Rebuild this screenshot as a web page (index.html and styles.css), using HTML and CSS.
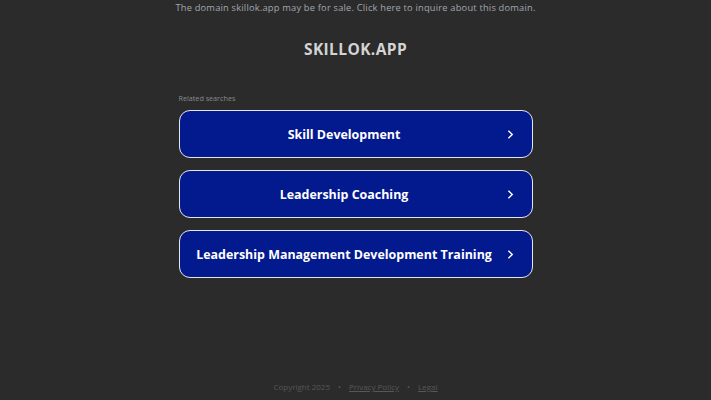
FILE: index.html
```html
<!DOCTYPE html>
<html lang="en">
  <head>
    <meta charset="UTF-8" />
    <meta name="viewport" content="width=device-width, initial-scale=1.0" />
    <title>skillok.app</title>
    <link rel="stylesheet" href="styles.css">
  </head>
  <body>
    <div class="page">
      <!-- 상단 안내 -->
      <p class="sale-notice">The domain skillok.app may be for sale. Click here to inquire about this domain.</p>
      <h1 class="domain-title">SKILLOK.APP</h1>

      <!-- 관련 검색 -->
      <div class="related">
        <p class="related-label">Related searches</p>
        <a class="search-btn" href="#">
          <span class="search-text">Skill Development</span>
          <svg class="chevron" viewBox="0 0 10 14" width="7" height="11"><path d="M2 1.5 L7.5 7 L2 12.5" fill="none" stroke="#fff" stroke-width="2" /></svg>
        </a>
        <a class="search-btn" href="#">
          <span class="search-text">Leadership Coaching</span>
          <svg class="chevron" viewBox="0 0 10 14" width="7" height="11"><path d="M2 1.5 L7.5 7 L2 12.5" fill="none" stroke="#fff" stroke-width="2" /></svg>
        </a>
        <a class="search-btn" href="#">
          <span class="search-text">Leadership Management Development Training</span>
          <svg class="chevron" viewBox="0 0 10 14" width="7" height="11"><path d="M2 1.5 L7.5 7 L2 12.5" fill="none" stroke="#fff" stroke-width="2" /></svg>
        </a>
      </div>

      <!-- 하단 -->
      <footer class="footer">
        <span>Copyright 2025</span>
        <span class="dot">•</span>
        <a href="#">Privacy Policy</a>
        <span class="dot">•</span>
        <a href="#">Legal</a>
      </footer>
    </div>
  </body>
</html>
```

FILE: styles.css
```css
html,
body {
  margin: 0;
  padding: 0;
  background: #2b2b2b;
  font-family: "Open Sans", "Liberation Sans", sans-serif;
}

.page {
  height: 400px;
  display: flex;
  flex-direction: column;
  align-items: center;
}

.sale-notice {
  margin: 1px 0 0;
  font-size: 9.3px;
  color: #a2a7ae;
  letter-spacing: 0.2px;
  line-height: 13px;
}

.domain-title {
  margin: 25px 0 0;
  font-size: 15.5px;
  font-weight: 700;
  color: #d4d4d4;
  letter-spacing: 0.4px;
  line-height: 20px;
}

.related {
  width: 354px;
  margin-top: 34px;
  display: flex;
  flex-direction: column;
  gap: 12px;
}

.related-label {
  margin: 0 0 -5px;
  font-size: 7.2px;
  color: #8a8a8a;
  line-height: 10px;
}

.search-btn {
  height: 48px;
  box-sizing: border-box;
  padding: 0 18px 0 12px;
  border: 1.5px solid #e6e6ee;
  border-radius: 11px;
  background: #03198e;
  display: flex;
  align-items: center;
  gap: 10px;
  text-decoration: none;
}

.search-text {
  flex: 1;
  text-align: center;
  white-space: nowrap;
  font-size: 12.45px;
  font-weight: 700;
  color: #fff;
}

.chevron {
  flex: none;
}

.footer {
  margin-top: auto;
  margin-bottom: 8px;
  font-size: 8px;
  color: #575757;
  display: flex;
  gap: 8px;
}

.footer a {
  color: #575757;
}
```
